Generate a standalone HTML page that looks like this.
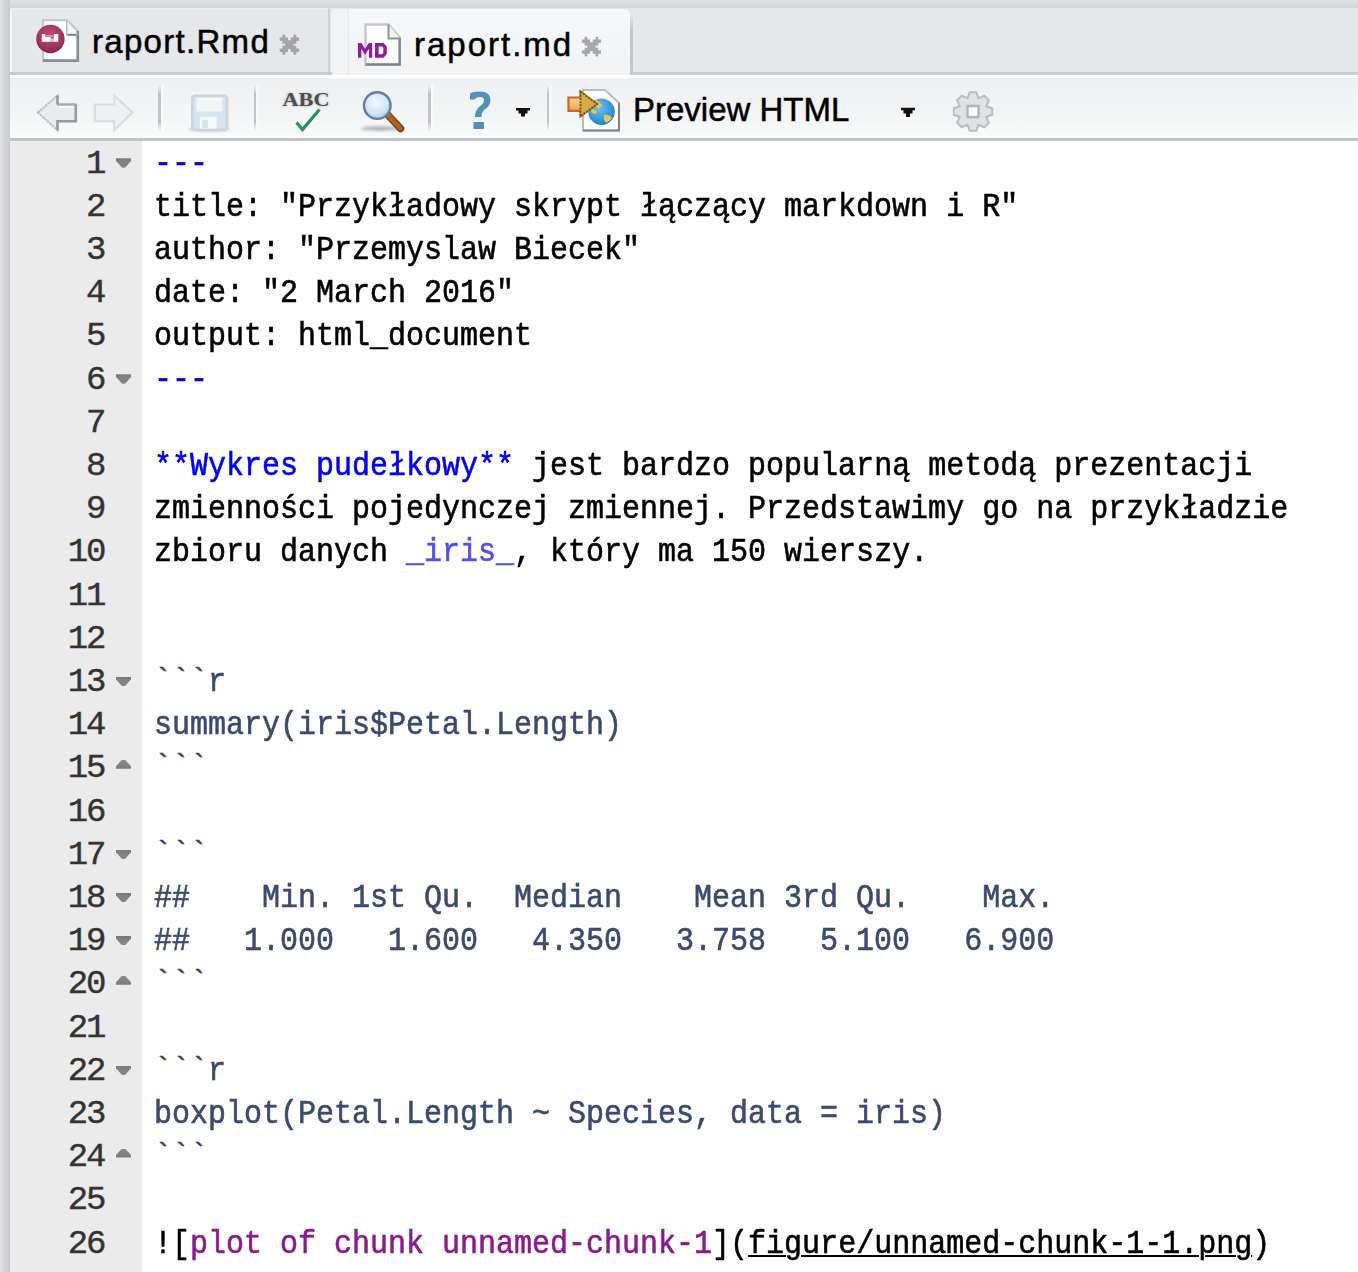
<!DOCTYPE html>
<html><head><meta charset="utf-8">
<style>
html,body{margin:0;padding:0;}
body{width:1358px;height:1272px;overflow:hidden;background:#dcdde0;position:relative;font-family:"Liberation Sans",sans-serif;}
#strip{position:absolute;left:0;top:0;width:10px;height:1272px;background:linear-gradient(90deg,#e0e1e5 0,#dcdde1 3px,#d3d4d8 4.5px,#d0d1d5 8px,#c8c9ce 9.5px,#c8c9ce 10px);}
#tabbar{position:absolute;left:10px;top:0;width:1348px;height:75px;background:linear-gradient(#dfe0e3 0,#d9dadd 5px,#d0d1d4 8px,#e6e7e9 8px,#e6e7e9 100%);}
.tab{position:absolute;top:8px;height:65px;}
#tab1{left:10px;width:316px;background:#e6e7ea;border-right:2px solid #cfd1d4;border-left:2px solid #f6f7f8;border-top:1px solid #eceef0;border-radius:3px 0 0 0;}
#tab2{left:331px;width:299px;top:9px;height:69px;background:linear-gradient(90deg,#f2f3f5 0,#f2f3f5 17.5px,#e4e6e8 17.5px,#e4e6e8 18.5px,transparent 18.5px),linear-gradient(#f7f8f9,#f1f2f4);border-radius:5px 5px 0 0;}
#tabline{position:absolute;left:10px;top:72px;width:322px;height:3px;background:#c9ccd0;}
#tabline2{position:absolute;left:630px;top:72px;width:728px;height:3px;background:#c9ccd0;}
#tab2sh{position:absolute;left:630px;top:14px;width:3px;height:60px;background:linear-gradient(rgba(195,198,201,0),#c3c6c9 25%,#c3c6c9);}
.ttext{position:absolute;font-size:33px;color:#000;white-space:nowrap;-webkit-text-stroke:0.5px #000;}
#toolbar{position:absolute;left:10px;top:75px;width:1348px;height:63px;background:linear-gradient(#ffffff 0,#ffffff 3px,#eef0f2 3px,#f3f4f5 40px,#f9fafa 62px);}
#tbline{position:absolute;left:10px;top:138px;width:1348px;height:3px;background:#bfc3c7;}
.sep{position:absolute;top:85px;width:2.5px;height:46px;background:linear-gradient(rgba(192,194,197,0),#c2c4c7 20%,#c2c4c7 80%,rgba(192,194,197,0));box-shadow:2.5px 0 0 rgba(255,255,255,0.55);}
#gutter{position:absolute;left:10px;top:141px;width:132px;height:1131px;background:#ebebeb;}
#editor{position:absolute;left:142px;top:141px;width:1216px;height:1131px;background:#fff;}
.ln{position:relative;-webkit-text-stroke:0.4px currentColor;text-align:right;font-family:"Liberation Mono",monospace;font-size:34px;letter-spacing:-2px;color:#333;}
.code{position:relative;-webkit-text-stroke:0.6px currentColor;font-family:"Liberation Mono",monospace;font-size:34px;color:#000;white-space:pre;}
.fd{position:absolute;left:116px;width:15px;height:9.5px;background:linear-gradient(#7a7a7a,#8a8a8a);clip-path:polygon(0 0,100% 0,100% 28%,60% 100%,40% 100%,0 28%);}
.fu{position:absolute;left:116px;width:15px;height:9px;background:linear-gradient(#8a8a8a,#7a7a7a);clip-path:polygon(40% 0,60% 0,100% 72%,100% 100%,0 100%,0 72%);}
.b{color:#0000f0}
.i{color:#5050f0}
.r{color:#3a4a70}
.p{color:#8b1a8b}
.u{text-decoration:underline;text-underline-offset:2px;text-decoration-thickness:1.6px}
</style></head><body>
<div id="tabbar"></div>
<div id="strip"></div>
<div class="tab" id="tab1"></div>
<div class="tab" id="tab2"></div>
<div id="tabline"></div>
<div id="tabline2"></div>
<div id="tab2sh"></div>
<div class="ttext" style="left:92px;top:23px;letter-spacing:1.3px">raport.Rmd</div>
<div class="ttext" style="left:414px;top:26px;letter-spacing:2px">raport.md</div>
<div id="toolbar"></div>
<div id="tbline"></div>
<div class="sep" style="left:158.3px"></div>
<div class="sep" style="left:253.8px"></div>
<div class="sep" style="left:428.2px"></div>
<div class="sep" style="left:546.5px"></div>
<div class="ttext" style="left:633px;top:91px;">Preview HTML</div>
<svg id="icons" width="1358" height="141" viewBox="0 0 1358 141" style="position:absolute;left:0;top:0">
<defs>
<radialGradient id="rball" cx="0.5" cy="0.35" r="0.7"><stop offset="0" stop-color="#c4457c"/><stop offset="0.5" stop-color="#a53a62"/><stop offset="0.8" stop-color="#903050"/><stop offset="1" stop-color="#7c1e3e"/></radialGradient>
<radialGradient id="lens" cx="0.45" cy="0.4" r="0.6"><stop offset="0" stop-color="#f4faff"/><stop offset="0.7" stop-color="#cfe4f6"/><stop offset="1" stop-color="#a9c9e6"/></radialGradient>
<radialGradient id="globe" cx="0.4" cy="0.35" r="0.7"><stop offset="0" stop-color="#6cc4f0"/><stop offset="1" stop-color="#1b7fc8"/></radialGradient>
<linearGradient id="arr" x1="0" y1="0" x2="0" y2="1"><stop offset="0" stop-color="#f6dcae"/><stop offset="0.5" stop-color="#f0bf78"/><stop offset="1" stop-color="#de8c3a"/></linearGradient>
<filter id="blur1" x="-50%" y="-50%" width="200%" height="200%"><feGaussianBlur stdDeviation="1.5"/></filter>
<filter id="blur05" x="-20%" y="-20%" width="140%" height="140%"><feGaussianBlur stdDeviation="0.6"/></filter>
</defs>
<!-- Rmd doc icon -->
<g>
<path d="M43,20.2 H66.7 L77.8,31 V60.6 H43 Z" fill="#fff" stroke="#c3c8cd" stroke-width="2.2"/>
<path d="M77.8,31 V60.6 H43" fill="none" stroke="#868c93" stroke-width="2.6"/>
<path d="M66.7,20.2 V34.8 H77.8" fill="#f2f4f6" stroke="#b5babf" stroke-width="1.4"/>
<path d="M67.5,34.8 H76.5" stroke="#7c838a" stroke-width="2"/>
<circle cx="50.4" cy="39" r="14.2" fill="url(#rball)" filter="url(#blur05)"/>
<g filter="url(#blur05)"><rect x="41.8" y="34" width="3.5" height="5" fill="#f6e6ee"/><rect x="41.8" y="37" width="9" height="4.8" fill="#fbf3f7"/><rect x="50.8" y="38.5" width="3" height="3.3" fill="#e8c4d6"/><rect x="53.8" y="34" width="4.5" height="7.8" fill="#fcf5f8"/><rect x="45.3" y="35" width="8.5" height="2" fill="#d48cae"/></g>
</g>
<!-- close x tab1 -->
<g fill="#a3a4a6" filter="url(#blur05)"><rect x="282.47" y="34.70" width="2.77" height="3.37"/><rect x="293.55" y="34.70" width="2.77" height="3.37"/><rect x="279.70" y="37.47" width="8.31" height="3.37"/><rect x="290.78" y="37.47" width="8.31" height="3.37"/><rect x="282.47" y="40.24" width="13.85" height="3.37"/><rect x="285.24" y="43.01" width="8.31" height="3.37"/><rect x="282.47" y="45.78" width="13.85" height="3.37"/><rect x="279.70" y="48.55" width="8.31" height="3.37"/><rect x="290.78" y="48.55" width="8.31" height="3.37"/><rect x="282.47" y="51.32" width="2.77" height="3.37"/><rect x="293.55" y="51.32" width="2.77" height="3.37"/></g>
<!-- MD doc icon -->
<g>
<path d="M365.5,24.5 H388.5 L399.7,37.5 V64.5 H365.5 Z" fill="#fff" stroke="#c3c8cd" stroke-width="2.4"/>
<path d="M399.7,37.5 V64.5 H365.5" fill="none" stroke="#80868d" stroke-width="2.4"/>
<path d="M388.5,24.5 V38.5 H400" fill="#f0f2f4" stroke="#8d939a" stroke-width="2"/>
<path d="M358,43 h3.5 l3.6,6 l3.6,-6 h3.5 v14.7 h-3.3 v-9 l-3.8,6 l-3.8,-6 v9 h-3.3 z" fill="#8d1d9c"/>
<path d="M375,43 h8.5 l3.3,3.5 v7.6 l-3.3,3.6 h-8.5 z M378.6,46.6 v7.6 h3.6 l1.1,-1.2 v-5.2 l-1.1,-1.2 z" fill="#8d1d9c" fill-rule="evenodd"/>
</g>
<!-- close x tab2 -->
<g fill="#a6a7a9" filter="url(#blur05)"><rect x="584.62" y="36.80" width="2.72" height="3.32"/><rect x="595.50" y="36.80" width="2.72" height="3.32"/><rect x="581.90" y="39.52" width="8.16" height="3.32"/><rect x="592.78" y="39.52" width="8.16" height="3.32"/><rect x="584.62" y="42.24" width="13.60" height="3.32"/><rect x="587.34" y="44.96" width="8.16" height="3.32"/><rect x="584.62" y="47.68" width="13.60" height="3.32"/><rect x="581.90" y="50.40" width="8.16" height="3.32"/><rect x="592.78" y="50.40" width="8.16" height="3.32"/><rect x="584.62" y="53.12" width="2.72" height="3.32"/><rect x="595.50" y="53.12" width="2.72" height="3.32"/></g>
<!-- back arrow -->
<path d="M38,112.5 L57.5,95.5 V104.5 H75.8 V121.2 H57.5 V130.3 Z" fill="#eaebed" stroke="#b9bcc0" stroke-width="2" stroke-linejoin="miter" stroke-dasharray="2.4 0.8"/>
<path d="M57.5,104.5 H75.8" stroke="#a9adb1" stroke-width="2.2"/><path d="M59,106.8 H74.5" stroke="#ffffff" stroke-width="1.6" opacity="0.8"/>
<path d="M57.5,95.5 V104.5 M75.8,104.5 V121.2 H57.5 V130.3" fill="none" stroke="#979b9f" stroke-width="2.6"/>
<!-- forward arrow -->
<path d="M132.5,112.5 L114.2,95.5 V104.5 H94.8 V121.2 H114.2 V130.3 Z" fill="#eff0f2" stroke="#d9dcdf" stroke-width="2"/>
<!-- save -->
<g>
<ellipse cx="209.5" cy="129" rx="20" ry="2.5" fill="#c9ccd0" filter="url(#blur1)"/>
<g filter="url(#blur05)">
<path d="M193.5,94.5 H226 L228.4,97 V128.7 L226,131.2 H193.5 L191,128.7 V97 Z" fill="#cbd5df"/>
<rect x="193.8" y="97" width="31.8" height="31.5" fill="#d4e4f1"/>
<rect x="196.4" y="97.6" width="26" height="13.9" fill="#f3f5f7"/>
<rect x="199.7" y="116.8" width="17" height="11.7" fill="#f6f8f9"/>
<rect x="202" y="120" width="6" height="8.5" fill="#d4e4f1"/>
</g>
</g>
<!-- ABC check -->
<g>
<text x="306" y="106" text-anchor="middle" font-family="Liberation Serif" font-weight="bold" font-size="18.5" fill="#b0b0b0" filter="url(#blur1)" textLength="48" lengthAdjust="spacingAndGlyphs">ABC</text>
<text x="306" y="105.5" text-anchor="middle" font-family="Liberation Serif" font-weight="bold" font-size="18.5" fill="#4e4e4e" textLength="47" lengthAdjust="spacingAndGlyphs">ABC</text>
<path d="M296.5,122.5 L302.5,129.5 L319.5,109.5" fill="none" stroke="#22915a" stroke-width="3.2" stroke-linecap="butt"/>
</g>
<!-- magnifier -->
<g>
<ellipse cx="380" cy="128.5" rx="19" ry="2.6" fill="#b3b6ba" filter="url(#blur1)"/>
<path d="M387.5,114.5 L400.5,128.5" stroke="#7a4418" stroke-width="7.5" stroke-linecap="round"/>
<path d="M387.5,114.5 L400.5,128.5" stroke="#a8642a" stroke-width="4.5" stroke-linecap="round" stroke-dasharray="2.2 1.2"/>
<circle cx="377.3" cy="105.6" r="13.3" fill="url(#lens)" stroke="#5f7f9e" stroke-width="2.4"/>
</g>
<!-- help ? -->
<path d="M470,94 Q471,91.5 480,91.5 Q490.5,91.5 490.5,100 Q490.5,106 484,110 Q481.5,112 481.5,117 H475 Q475,110 479.5,106.5 Q484,103.5 484,100 Q484,97 480,97 Q476,97 474.5,99.5 L470,99.5 Z" fill="#5190ba" filter="url(#blur05)"/>
<rect x="473.5" y="122" width="10.5" height="7" fill="#5190ba" filter="url(#blur05)"/>
<!-- dropdowns -->
<path d="M516,108 H530 V110.6 H527.5 V113.5 H525 V116.6 H521 V113.5 H518.5 V110.6 H516 Z" fill="#111"/>
<path d="M901,107.7 H915 V110.3 H912.5 V113.5 H910 V117 H906 V113.5 H903.5 V110.3 H901 Z" fill="#111"/>
<!-- preview icon -->
<g>
<path d="M583,90 H605 L619,103 V130.5 H583 Z" fill="#fff" stroke="#b8bdc2" stroke-width="2"/>
<path d="M619,103 V130.5 H583" fill="none" stroke="#7c8289" stroke-width="2"/>
<circle cx="601.5" cy="111.7" r="13.3" fill="url(#globe)"/>
<path d="M596,100 q5,2 6,6 q-3,3 -6,1 q-2,-4 0,-7 z M604,115 q5,-1 8,3 q-3,5 -7,4 q-2,-3 -1,-7 z M592,108 q2,3 5,3 l-1,3 q-4,0 -5,-3 z" fill="#f2c34a"/>
<path d="M568.5,97.5 H580.5 V91.8 L597,104 L580.5,116.4 V110.8 H568.5 Z" fill="url(#arr)" stroke="#c06a22" stroke-width="2.2"/>
<path d="M580.5,91.8 L597,104 L580.5,116.4 Z" fill="#d6aa44" stroke="#6e5010" stroke-width="1.8" stroke-dasharray="2 1.2"/>
</g>
<!-- gear -->
<g transform="translate(973,111.5)" filter="url(#blur05)">
<path d="M-5.38,-13.47 L-3.30,-19.22 L3.30,-19.22 L5.38,-13.47 L5.72,-13.32 L11.26,-15.92 L15.92,-11.26 L13.32,-5.72 L13.47,-5.38 L19.22,-3.30 L19.22,3.30 L13.47,5.38 L13.32,5.72 L15.92,11.26 L11.26,15.92 L5.72,13.32 L5.38,13.47 L3.30,19.22 L-3.30,19.22 L-5.38,13.47 L-5.72,13.32 L-11.26,15.92 L-15.92,11.26 L-13.32,5.72 L-13.47,5.38 L-19.22,3.30 L-19.22,-3.30 L-13.47,-5.38 L-13.32,-5.72 L-15.92,-11.26 L-11.26,-15.92 L-5.72,-13.32 Z" fill="#dfe1e4" stroke="#b9bcc0" stroke-width="2"/>
<rect x="-5.5" y="-5.5" width="11" height="11" fill="#fff" stroke="#b2b5b9" stroke-width="2.5"/>
</g>
</svg>
<div id="gutter"></div>
<div id="editor"></div>
<div id="lines"><div id="nums" style="position:absolute;left:10px;width:94.5px;top:142.60px;line-height:43.20px">
<div class="ln">1</div>
<div class="ln">2</div>
<div class="ln">3</div>
<div class="ln">4</div>
<div class="ln">5</div>
<div class="ln">6</div>
<div class="ln">7</div>
<div class="ln">8</div>
<div class="ln">9</div>
<div class="ln">10</div>
<div class="ln">11</div>
<div class="ln">12</div>
<div class="ln">13</div>
<div class="ln">14</div>
<div class="ln">15</div>
<div class="ln">16</div>
<div class="ln">17</div>
<div class="ln">18</div>
<div class="ln">19</div>
<div class="ln">20</div>
<div class="ln">21</div>
<div class="ln">22</div>
<div class="ln">23</div>
<div class="ln">24</div>
<div class="ln">25</div>
<div class="ln">26</div>
</div>
<div id="code" style="position:absolute;left:153.5px;top:142.60px;line-height:43.20px;transform:scaleX(0.88235);transform-origin:0 0">
<div class="code"><span class="b">---</span>&#8203;</div>
<div class="code">title: "Przykładowy skrypt łączący markdown i R"&#8203;</div>
<div class="code">author: "Przemyslaw Biecek"&#8203;</div>
<div class="code">date: "2 March 2016"&#8203;</div>
<div class="code">output: html_document&#8203;</div>
<div class="code"><span class="b">---</span>&#8203;</div>
<div class="code">&#8203;</div>
<div class="code"><span class="b">**Wykres pudełkowy**</span> jest bardzo popularną metodą prezentacji&#8203;</div>
<div class="code">zmienności pojedynczej zmiennej. Przedstawimy go na przykładzie&#8203;</div>
<div class="code">zbioru danych <span class="i">_iris_</span>, który ma 150 wierszy.&#8203;</div>
<div class="code">&#8203;</div>
<div class="code">&#8203;</div>
<div class="code"><span class="r">```r</span>&#8203;</div>
<div class="code"><span class="r">summary(iris$Petal.Length)</span>&#8203;</div>
<div class="code"><span class="r">```</span>&#8203;</div>
<div class="code">&#8203;</div>
<div class="code"><span class="r">```</span>&#8203;</div>
<div class="code"><span class="r">##    Min. 1st Qu.  Median    Mean 3rd Qu.    Max. </span>&#8203;</div>
<div class="code"><span class="r">##   1.000   1.600   4.350   3.758   5.100   6.900 </span>&#8203;</div>
<div class="code"><span class="r">```</span>&#8203;</div>
<div class="code">&#8203;</div>
<div class="code"><span class="r">```r</span>&#8203;</div>
<div class="code"><span class="r">boxplot(Petal.Length ~ Species, data = iris)</span>&#8203;</div>
<div class="code"><span class="r">```</span>&#8203;</div>
<div class="code">&#8203;</div>
<div class="code">![<span class="p">plot of chunk unnamed-chunk-1</span>](<span class="u">figure/unnamed-chunk-1-1.png</span>)&#8203;</div>
</div>
<div class="fd" style="top:158.3px"></div>
<div class="fd" style="top:374.3px"></div>
<div class="fd" style="top:676.7px"></div>
<div class="fu" style="top:759.8px"></div>
<div class="fd" style="top:849.5px"></div>
<div class="fd" style="top:892.7px"></div>
<div class="fd" style="top:935.9px"></div>
<div class="fu" style="top:975.8px"></div>
<div class="fd" style="top:1065.5px"></div>
<div class="fu" style="top:1148.6px"></div></div><!--/lines-->
</body></html>
